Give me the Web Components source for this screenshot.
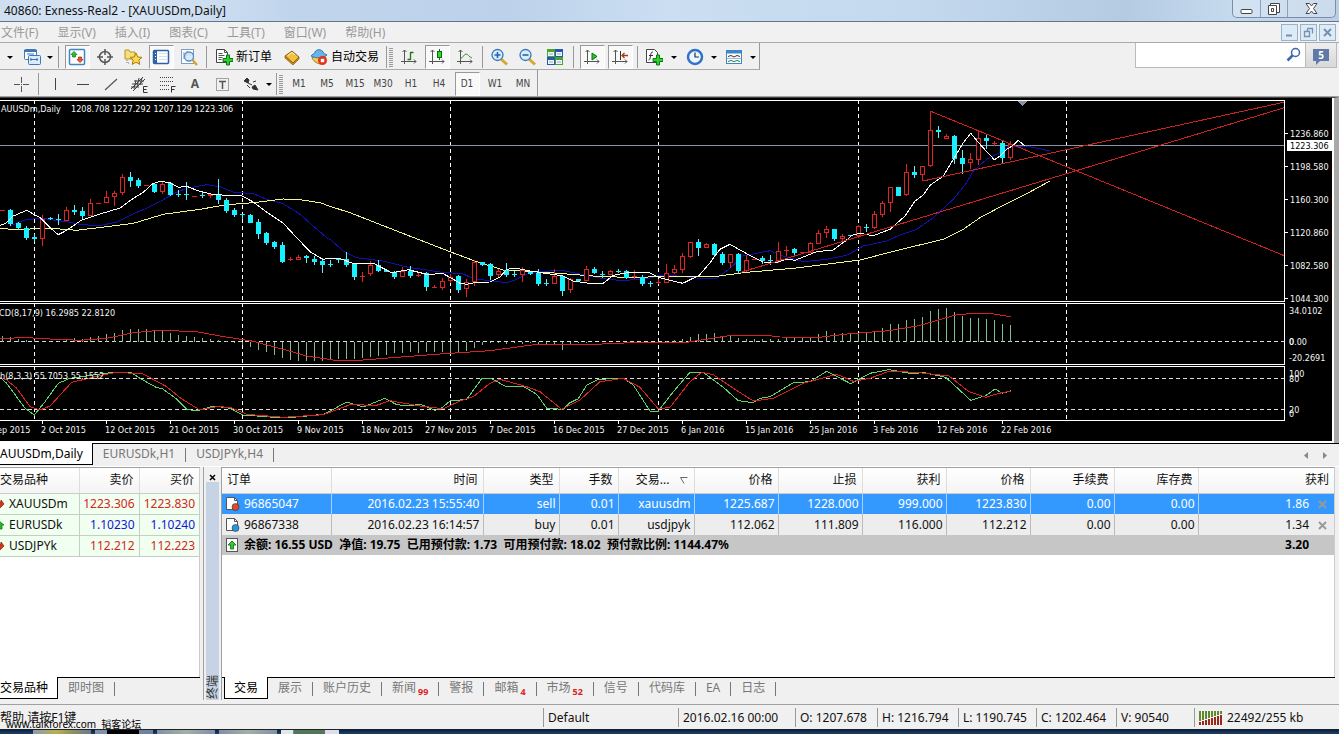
<!DOCTYPE html>
<html lang="zh-CN">
<head>
<meta charset="utf-8">
<title>Exness-Real2 - [XAUUSDm,Daily]</title>
<style>
html,body{margin:0;height:100%}
body{font:12px/16px "Noto Sans","Noto Sans CJK SC",sans-serif;color:#111;background:#f0f0f0;overflow:hidden}
</style>
</head>
<body>
<trade-app></trade-app>
<script>
const BASE = `*{box-sizing:border-box} button,input{font:inherit;color:inherit;margin:0;padding:0;border:0;background:none;border-radius:0}`;
function component(name, css, html, ready) {
  customElements.define(name, class extends HTMLElement {
    constructor() {
      super();
      this.attachShadow({ mode: 'open' });
    }
    connectedCallback() {
      const body = typeof html === 'function' ? html(this) : html;
      this.shadowRoot.innerHTML = `<style>${BASE}${css}</style>${body}`;
      if (ready) ready(this.shadowRoot);
    }
  });
}

/* ---------- icons ---------- */
const axes = '<path d="M4.500 2v14M1 13.500h15M2.500 4l2-2 2 2M14 11.500l2 2-2 2" fill="none" stroke="#555"/>';
const plus = '<path d="M8 10.500h3.500V7h3v3.500H18v3h-3.500V17h-3v-3.500H8z" fill="#2fd02f" stroke="#0a7a12"/>';
const ICONS = {
  windows: '<rect x="1.500" y="1.500" width="12" height="10" rx="1" fill="#fff" stroke="#3f76b5"/><path d="M1 3h13" stroke="#3f76b5" stroke-width="2"/><rect x="5.500" y="7.500" width="12" height="9" rx="1" fill="#dcebfa" stroke="#3f76b5"/><path d="M7 11.500h8M8 10v3M14 10v3M4 6h7" stroke="#3f76b5"/>',
  market: '<rect x="1.500" y="1.500" width="15" height="15" rx="1" fill="#fff" stroke="#3f86c8" stroke-width="1.500"/><path d="M6 3.500l3 3H7.500V9h-3V6.500H3z" fill="#2cc22c" stroke="#087808" stroke-width=".7"/><path d="M12 14.500l-3-3h1.500V9h3v2.500H15z" fill="#f0552c" stroke="#a02008" stroke-width=".7"/>',
  target: '<circle cx="9" cy="9" r="5.500" fill="none" stroke="#555" stroke-width="1.500"/><path d="M9 1v6M9 11v6M1 9h6M11 9h6" stroke="#555" stroke-width="1.500"/>',
  navigator: '<path d="M1 2h4l1 2h5v7H1z" fill="#f6df7a" stroke="#b99425"/><path d="M3 12v3h3" stroke="#777" stroke-dasharray="1 1" fill="none"/><path d="M12 5l1.800 4 4.200.4-3.200 2.700 1 4.300L12 14.200 8.200 16.400l1-4.300L6 9.400l4.200-.4z" fill="#ffd84a" stroke="#a87c12"/>',
  terminal: '<rect x="1.500" y="2.500" width="15" height="13" rx="1" fill="#fff" stroke="#2d62a6" stroke-width="1.500"/><path d="M2 3h3v12H2z" fill="#2d62a6"/><path d="M7 5.500h8M7 8.500h8M7 11.500h8" stroke="#d6e1ee"/><path d="M3.500 5v1M3.500 8v1M3.500 11v1" stroke="#fff"/>',
  tester: '<rect x="1.500" y="1.500" width="12" height="14" fill="#fff" stroke="#7d9cc0"/><path d="M4 4v7M7 3v5M10 5v3" stroke="#6a8cc0"/><circle cx="9" cy="8.500" r="4.500" fill="#cfe5f7cc" stroke="#5a8cc8" stroke-width="1.300"/><path d="M12.500 12l4.500 5" stroke="#d9a42e" stroke-width="2.500"/>',
  order: '<path d="M1.500 1.500h8l3 3v10h-11z" fill="#fff" stroke="#444"/><path d="M9.500 1.500v3h3M3.500 5.500h4M3.500 7.500h6M3.500 9.500h4M3.500 11.500h3" fill="none" stroke="#555"/>' + plus,
  editor: '<path d="M2 8l7-5 7 6-6 6z" fill="#f0c040" stroke="#8a5f10"/><path d="M2 8v2l8 7 6-6V9l-6 6z" fill="#c98a1c" stroke="#8a5f10" stroke-width=".7"/><path d="M5 7.500l4-3 3 2.500" stroke="#fff3b8" fill="none"/>',
  auto: '<path d="M2 10c2 4 6 6 9 6l5-5-2-4H4z" fill="#f3cf4c" stroke="#a07a18"/><path d="M1 8c1-2 4-2 4-4 1-3 7-3 8 0 0 2 3 2 4 3-3 3-11 4-16 1z" fill="#69b4e6" stroke="#2b79b5"/><circle cx="12.500" cy="12.500" r="4.500" fill="#e0341c"/><rect x="10.800" y="10.800" width="3.400" height="3.400" fill="#fff"/>',
  bars: axes + '<path d="M10.500 4v8M10.500 4.500h3M10.500 11.500h-3" stroke="#187818" stroke-width="1.300"/>',
  candles: axes + '<path d="M11.500 1v11" stroke="#087008"/><rect x="9.500" y="3.500" width="4" height="6" fill="#35d435" stroke="#087008"/>',
  line: axes + '<path d="M4 11c3-1 4-5 6-5s3 3 6 4" fill="none" stroke="#3c8c3c"/>',
  zoomin: '<path d="M11 11l6 5.500" stroke="#d5a92e" stroke-width="3"/><circle cx="7.500" cy="7" r="5.500" fill="#d8edfb" stroke="#3a78b8" stroke-width="1.300"/><path d="M4.500 7h6M7.500 4v6" stroke="#2a63ad" stroke-width="1.600"/>',
  zoomout: '<path d="M11 11l6 5.500" stroke="#d5a92e" stroke-width="3"/><circle cx="7.500" cy="7" r="5.500" fill="#d8edfb" stroke="#3a78b8" stroke-width="1.300"/><path d="M4.500 7h6" stroke="#2a63ad" stroke-width="1.600"/>',
  tile: '<path d="M1 1h8v8H1zM9 9h8v8H9z" fill="#4ca32c"/><path d="M9 1h8v8H9zM1 9h8v8H1z" fill="#2a58b0"/><path d="M2 4h6v4H2zM10 4h6v4h-6zM2 12h6v4H2zM10 12h6v4h-6z" fill="#eef6ff"/><path d="M3 6h4M11 6h4M3 14h4M11 14h4" stroke="#9ab"/>',
  shift: axes + '<path d="M9 5l5 3.500L9 12z" fill="#35c035" stroke="#087008"/>',
  autoscroll: axes + '<path d="M9.500 3v9" stroke="#333"/><path d="M17 7.500h-6M13.500 5l-2.500 2.500 2.500 2.500" stroke="#b03a10" fill="none" stroke-width="1.300"/>',
  indicator: '<path d="M1.500 1.500h8l3 3v10h-11z" fill="#fff" stroke="#444"/><path d="M8 4c-2 0-2 1-2.500 4S5 12 3.500 12M4 7.500h4" fill="none" stroke="#333"/>' + plus,
  clock: '<circle cx="9" cy="9" r="7" fill="#eef7ff" stroke="#2f72c8" stroke-width="2.500"/><path d="M9 4.500V9h4" fill="none" stroke="#234" stroke-width="1.200"/>',
  template: '<rect x="1.500" y="2.500" width="15" height="13" fill="#fff" stroke="#3f86c8"/><path d="M2 4h14" stroke="#3f86c8" stroke-width="3"/><path d="M3 8.500l3-1 3 1.500 3-1.500 3 1" fill="none" stroke="#333"/><path d="M2 10.500h14" stroke="#9bc"/><path d="M3 13.500l3-1 3 1 3-1 3 1" fill="none" stroke="#2b7a4b"/>',
  cross: '<path d="M9.500 2v6M9.500 11v6M2 9.500h6M11 9.500h6M9 9.500h1" stroke="#555"/>',
  vline: '<path d="M9.500 3v12" stroke="#444"/>',
  hline: '<path d="M3 9.500h12" stroke="#444"/>',
  tline: '<path d="M3 15L15 4" stroke="#555" stroke-width="1.200"/>',
  equi: '<path d="M1 14L13 2M3 16L15 4M2 9h11M4 6h10M1 12h8M6 5l-2 9M9 3l-2 9M12 3l-2 7" stroke="#444"/><path d="M17.500 11.500h-4v6h4M13.500 14.500h3" fill="none" stroke="#333"/>',
  fibo: '<path d="M2 2.500h14M2 6.500h14M2 10.500h10M2 14.500h10" stroke="#444" stroke-dasharray="1 1"/><path d="M17.500 11.500h-4v6M13.500 14.500h3" fill="none" stroke="#333"/>',
  label: '<rect x="2.500" y="3.500" width="12" height="12" fill="none" stroke="#555" stroke-dasharray="1 1"/><path d="M5 6.500h7M8.500 6v8" stroke="#555" stroke-width="1.500"/>',
  arrows: '<path d="M2 6l3-3 2 2-1 3zM6 8l4 2M10 12l3-2 3 5-5-1zM11 7l3-1M5 10l3 3" fill="#333" stroke="#333"/>',
  find: '<circle cx="10.500" cy="6.500" r="4" fill="#fff" stroke="#3a66b0" stroke-width="1.500"/><path d="M7.500 9.500l-5 5" stroke="#3a66b0" stroke-width="2.500"/>'
};
const svg = (body, w = 18, h = 18) => `<svg width="${w}" height="${h}" viewBox="0 0 ${w} ${h}" aria-hidden="true">${body}</svg>`;

component('tool-button', `
 :host{display:flex;flex:none;width:28px;justify-content:center;align-items:center}
 :host([wide]){width:auto}
 button{display:flex;align-items:center;justify-content:center;width:25px;height:24px;white-space:nowrap}
 :host([wide]) button{width:auto;gap:3px;color:#000}
 :host([on]) button{background:#f9f9f9;border:1px solid #fff;border-top-color:#999;border-left-color:#999}
 svg{display:block;flex:none}
 ::slotted(b){font-size:12px;color:#555}
`, el => `<button aria-label="${el.getAttribute('icon') || 'period'}">${ICONS[el.getAttribute('icon')] ? svg(ICONS[el.getAttribute('icon')]) : ''}<slot></slot></button>`);
component('tool-caret', `
 :host{display:flex;flex:none;width:11px;justify-content:center;align-items:center}
 button{width:7px;height:20px;display:flex;align-items:center}
`, `<button aria-label="more">${svg('<path d="M0 0h6L3 3z" fill="#000"/>', 6, 3)}</button>`);
component('tool-sep', `
 :host{display:flex;flex:none;width:6px;justify-content:center;align-items:center}
 i{width:1px;height:22px;background:#999}
`, `<i></i>`);
component('tool-grip', `
 :host{display:block;flex:none;width:4px;height:19px;margin:auto 0;background:repeating-linear-gradient(#999 0 1px,transparent 1px 2px)}
`, ``);

/* ---------- title and menu ---------- */
component('title-bar', `
 :host{display:flex;justify-content:space-between;height:22px;border-bottom:1px solid #66748a;background:linear-gradient(90deg,#cfdff0,#d6e4f3 10%,#c0d5ec 22%,#bdd2ea 38%,#cbdef2 50%,#c4d9ee 68%,#b4cbe2 84%,#c6daee 92%,#b9cee6);color:#111}
 h1{margin:0;padding:3px 4px;font:inherit;line-height:16px;white-space:pre}
 div{display:flex;width:104px;height:18px;margin-right:3px;border:1px solid #7c8ea6;border-top:0;border-radius:0 0 5px 5px;background:#ffffff40}
 button{flex:1;display:flex;justify-content:center;align-items:center}
 button+button{border-left:1px solid #8fa1b8}
 button:last-child{flex:none;width:48px}
`, `<h1>40860: Exness-Real2 - [XAUUSDm,Daily]</h1><div>
 <button aria-label="minimize">${svg('<rect x="1" y="7.500" width="11" height="4" rx="1" fill="#fff" stroke="#444"/>', 13, 14)}</button>
 <button aria-label="restore">${svg('<path d="M3.500 1.500h9v9h-9z" fill="#fff" stroke="#444"/><path d="M1.500 3.500h8v9h-8z" fill="#fff" stroke="#444"/><path d="M4.500 6.500h2v3h-2z" fill="none" stroke="#444"/>', 14, 14)}</button>
 <button aria-label="close">${svg('<path d="M1 1.500h3.500L6.500 4l2-2.500H12L8.500 6.500 12 11.500H8.500L6.500 9l-2 2.500H1l3.500-5z" fill="#fff" stroke="#444"/>', 13, 13)}</button></div>`);

component('menu-bar', `
 :host{display:flex;justify-content:space-between;height:21px;border-bottom:1px solid #a9abb0;background:#f1f1f1;color:#999}
 nav{display:flex;gap:19px;padding:1px 1px 0}
 button{white-space:nowrap}
 div{display:flex;gap:2px;padding:2px 3px 1px 0}
 div button{width:17px;display:flex;justify-content:center;align-items:center;border:1px solid #9ab1cb;background:#dcebf8}
`, `<nav>${['文件(F)', '显示(V)', '插入(I)', '图表(C)', '工具(T)', '窗口(W)', '帮助(H)'].map(t => `<button>${t}</button>`).join('')}</nav><div>
 <button aria-label="minimize chart">${svg('<path d="M2 8.500h6" stroke="#7790ae" stroke-width="2"/>', 11, 11)}</button>
 <button aria-label="restore chart">${svg('<path d="M4.500 1.500h5v5M4.500 4V1.500M1.500 4.500h5v5h-5z" fill="none" stroke="#7790ae" stroke-width="1.300"/>', 11, 11)}</button>
 <button aria-label="close chart">${svg('<path d="M2 2l7 7M9 2l-7 7" stroke="#7790ae" stroke-width="2"/>', 11, 11)}</button></div>`);

/* ---------- toolbars ---------- */
const tb = (n, a = '') => `<tool-button icon="${n}" ${a}></tool-button>`;
component('tool-rows', `
 :host{display:flex;justify-content:space-between;height:54px;background:#f0f0f0;border-bottom:1px solid #a0a0a0}
 .rows{flex:none}
 .r{display:flex;height:27px;width:max-content;border-right:1px solid #999;border-bottom:1px solid #aaa;padding:2px 0 0 2px}
 .r+.r{border-bottom:0;height:26px;padding-left:7px}
 .r+.r tool-button{color:#444}
 .t{font:10px/14px "DejaVu Sans Condensed","Open Sans",sans-serif}
 .find{display:flex;height:25px;margin-right:2px}
 label{display:flex;align-items:center;width:171px;background:#fff;border:1px solid #bbb;border-top:0;padding-right:2px}
 input{flex:1;min-width:0;outline:0}
 .chat{width:31px;background:linear-gradient(#eee,#d8d8d8);border:1px solid #bbb;border-top:0;border-left:0;display:flex;align-items:center;justify-content:center}
 .chat span{position:relative;width:16px;height:12px;background:#6079a8;color:#fff;font:bold 10px/12px "Noto Sans",sans-serif}
 .chat span::after{content:"";position:absolute;left:3px;top:12px;border:4px solid transparent;border-top-color:#6079a8;border-left:0;border-bottom:0}
 .g4{margin-left:4px}.g6{margin-left:6px}.gr{margin-right:2px}
 .c8{width:8px}.c9{width:9px}.c13{width:13px}.c16{width:16px}
`, `<div class="rows"><div class="r">
 <tool-caret class="c16"></tool-caret>${tb('windows')}<tool-caret class="c8"></tool-caret><tool-sep class="c9"></tool-sep>
 ${tb('market', 'on')}${tb('target')}${tb('navigator')}${tb('terminal', 'on')}${tb('tester')}<tool-sep></tool-sep>
 <tool-button icon="order" wide class="g6">新订单</tool-button><tool-button icon="editor" class="g6"></tool-button>
 <tool-button icon="auto" wide class="g4">自动交易</tool-button><tool-sep class="g4"></tool-sep><tool-grip class="gr"></tool-grip>
 ${tb('bars')}${tb('candles', 'on')}${tb('line')}<tool-sep></tool-sep>
 ${tb('zoomin')}${tb('zoomout')}${tb('tile')}<tool-sep class="c9"></tool-sep>
 ${tb('shift', 'on')}${tb('autoscroll', 'on')}<tool-sep></tool-sep>
 ${tb('indicator')}<tool-caret class="c13"></tool-caret>${tb('clock')}<tool-caret></tool-caret>${tb('template')}<tool-caret></tool-caret></div>
 <div class="r">${tb('cross')}<tool-sep></tool-sep>${['vline', 'hline', 'tline', 'equi', 'fibo'].map(n => tb(n)).join('')}
 <tool-button><b>A</b></tool-button>${tb('label')}${tb('arrows')}<tool-caret class="c8"></tool-caret><tool-sep></tool-sep><tool-grip class="gr"></tool-grip>
 ${['M1', 'M5', 'M15', 'M30', 'H1', 'H4', 'D1', 'W1', 'MN'].map(t => `<tool-button class="t" ${t === 'D1' ? 'on' : ''}>${t}</tool-button>`).join('')}</div></div>
 <div class="find"><label><input type="search" aria-label="search">${svg(ICONS.find)}</label><button class="chat" aria-label="messages"><span>5</span></button></div>`);

/* ---------- chart ---------- */
/* Each bar: high, body top, body bottom, low, rising. Units are thirds of a pixel below y=-2. */
const BARS = [[343,343,345,345,1],[338,341,384,390,0],[377,381,397,403,0],[390,397,427,433,0],[413,424,429,437,0],[358,368,428,450,1],[363,366,370,372,0],[355,369,373,386,0],[333,343,374,374,1],[326,343,349,357,0],[332,346,359,368,0],[310,322,359,359,1],[321,321,323,323,1],[285,304,322,322,1],[284,290,304,330,1],[235,244,290,296,1],[229,243,254,273,0],[247,252,270,275,0],[266,266,268,268,1],[262,264,287,290,0],[256,265,288,293,1],[258,262,297,301,0],[282,294,297,303,0],[259,295,298,313,0],[299,299,301,301,1],[289,296,300,306,0],[290,295,300,306,1],[250,295,313,325,0],[306,311,344,350,0],[335,342,356,364,0],[354,354,358,368,0],[354,358,380,381,0],[368,378,414,428,0],[407,411,441,447,0],[434,438,453,459,0],[437,448,497,500,0],[483,489,491,495,1],[476,482,491,493,1],[478,481,486,501,0],[480,489,497,507,0],[487,495,507,530,0],[492,503,508,514,0],[487,489,492,500,0],[468,489,506,512,0],[500,503,542,553,0],[528,540,544,557,1],[495,507,535,540,1],[493,507,524,527,0],[521,523,528,529,0],[524,527,543,550,0],[512,524,542,543,1],[510,524,540,545,0],[530,536,539,542,1],[527,532,573,584,0],[566,573,575,576,1],[545,556,575,583,1],[535,543,556,561,1],[538,540,581,590,0],[550,557,579,602,1],[492,497,557,571,1],[497,499,506,510,0],[500,504,539,551,0],[518,526,538,545,1],[502,522,536,543,0],[526,534,537,543,0],[512,522,536,558,1],[525,527,535,538,0],[520,530,563,569,0],[548,560,563,571,0],[520,541,563,563,1],[537,540,584,599,0],[545,550,583,590,1],[548,550,556,558,0],[511,519,554,556,1],[514,518,532,535,0],[525,533,537,545,0],[522,524,537,538,1],[520,525,527,531,0],[523,526,545,550,0],[523,541,543,550,1],[538,543,563,570,0],[554,561,564,573,0],[549,559,562,565,1],[505,531,560,560,1],[507,520,532,533,1],[472,481,521,530,1],[437,439,482,485,1],[430,438,455,481,0],[442,445,455,456,1],[441,445,477,480,0],[468,474,500,507,0],[474,475,500,515,1],[470,474,524,535,0],[476,493,524,527,1],[488,488,490,490,1],[481,487,495,503,0],[477,491,495,508,0],[438,465,494,500,1],[451,461,465,480,1],[455,459,471,480,0],[469,469,471,471,1],[437,442,471,471,1],[403,411,443,445,1],[391,400,411,425,1],[398,399,429,434,0],[415,419,429,442,1],[416,418,421,422,0],[388,391,419,425,1],[384,393,397,407,0],[345,355,396,400,1],[316,322,356,362,1],[273,274,322,347,1],[272,273,299,300,0],[205,229,298,299,1],[211,228,236,245,0],[209,211,237,255,1],[46,103,211,213,1],[90,103,109,125,0],[114,121,128,128,1],[117,120,188,203,0],[162,185,203,233,0],[172,190,202,218,1],[106,127,191,207,1],[114,126,135,158,0],[135,141,144,150,1],[135,141,185,205,0],[135,143,186,192,1]];
/* Histogram bar ends, in thirds of a pixel; 124 is the zero line. */
const HIST = [108,112,117,119,121,122,122,122,120,115,117,112,108,102,99,90,87,88,88,92,93,98,104,108,112,114,118,120,122,130,136,140,150,157,165,175,180,182,184,183,182,178,176,177,177,173,170,168,165,160,158,157,158,156,157,155,158,155,152,143,134,129,130,131,130,131,130,131,133,133,150,132,130,128,127,127,127,126,126,126,126,126,124,122,120,118,110,103,101,100,108,108,113,116,116,116,118,116,113,112,112,112,103,92,98,100,103,100,97,92,85,72,72,60,57,50,33,27,24,37,47,53,53,57,60,72,75];
/* Line segments: x offset of the run in pixels, then x,y pairs in thirds of a pixel. */
const LINES = {
 white: [[0,'0,388 15,383 40,360 80,343 120,365 150,395 175,416 200,403 245,372 290,357 360,336 400,307 430,289 455,265 480,256 510,260 535,274 560,271 590,283 640,296 725,299 760,318 795,345 850,382 890,425 930,467 968,490'],[330,'0,487 30,488 75,504 130,502 185,530 235,521 290,535 340,533 370,550 390,562 410,565 440,559 480,558 510,543 530,520 555,516 600,525 700,540 730,555 770,561 820,562 850,538 900,529 960,531'],[660,'0,545 68,562 118,538 150,500 180,460 210,445 260,473 310,498 350,499 380,490 405,493 470,467 520,462 560,432 575,418 600,412 640,419 690,400 735,360 765,315 790,297 810,268 850,240 880,190 910,140 932,112 960,145 1003,191'],[1000,'0,180 20,160 40,148 55,133 75,150']],
 blue: [[0,'30,390 70,373 120,366 160,372 200,377 240,385 295,390 350,378 400,353 440,337 480,317 520,293 560,277 620,266 660,272 700,288 760,293 800,310 850,323 900,355 940,390 980,425'],[330,'0,430 40,465 80,485 160,495 230,513 330,528 400,534 430,548 530,560 560,550 600,530 690,522 740,532 820,548 880,554 960,546'],[660,'0,538 50,540 120,547 170,547 200,525 250,480 330,464 370,480 430,497 500,490 560,478 610,450 680,435 720,417 770,400 820,365 880,310 920,260 940,225 980,190'],[1000,'0,170 30,150 80,150 150,165']],
 yellow: [[0,'0,397 60,402 120,396 180,399 230,403 320,392 400,382 490,355 600,340 680,326 760,320 850,309 900,311 960,320'],[330,'0,331 60,350 200,405 360,467 440,497 520,522 660,530 800,541 920,545'],[660,'0,541 170,541 260,529 400,517 600,492 720,461 850,430 910,400 960,365'],[1000,'0,333 80,293 150,255']],
 signal: [[0,'0,117 70,112 130,116 240,121 320,115 400,98 480,91 590,95 660,108 760,124 850,148 920,168 1000,180 1090,180 1190,172'],[440,'0,162 150,152 290,133 440,134 600,127 740,127 880,105 970,105 1020,111 1140,112 1220,102'],[889,'0,92 90,77 200,45 260,39 310,41 365,50']],
 stoK: [[0,'0,232 20,250 75,325 103,345 135,305 175,250 210,235 300,222 340,217 395,219 425,238 470,263 485,265 530,297 560,328 590,333 640,318 690,325 730,345 850,354 900,350 970,343 1000,328 1040,306 1090,321 1155,295 1190,314 1230,318 1260,312 1305,331'],[440,'0,328 30,303 80,298 125,236 155,236 200,261 250,259 290,283 320,325 370,328 390,308 415,296 440,255 475,238 550,235 580,255 630,333 655,333 700,275 750,217 790,217 850,262 895,302 940,308 960,295 990,290 1060,248 1110,245 1160,214 1232,251 1290,220'],[889,'0,209 75,222 100,217 170,232 245,301 290,287 318,267 340,280 365,272']],
 stoD: [[0,'0,232 20,240 50,265 90,320 120,330 150,318 215,247 300,227 350,217 430,222 500,260 545,297 600,330 650,320 690,322 740,343 850,352 970,344 1050,314 1130,316 1170,302 1260,318'],[440,'10,326 60,303 100,290 150,250 180,238 260,260 300,275 365,328 420,300 480,245 550,235 600,262 655,327 690,322 750,245 785,217 820,224 880,265 940,303 1000,295 1090,250 1190,223 1240,244 1290,235'],[889,'0,214 80,217 180,228 240,275 290,292 330,280 365,273']]
};
const poly = (segs, y0, color) => '<polyline fill="none" stroke="' + color + '" points="' + segs.map(([x0, s]) => s.split(' ').map(p => { const [x, y] = p.split(','); return (x0 + x / 3).toFixed(1) + ',' + (y0 + y / 3).toFixed(1); }).join(' ')).join(' ') + '"/>';
function plot() {
  let o = '';
  for (const x of [34, 242, 450, 658, 858, 1066]) o += `<path d="M${x + .5} 2V322" stroke="#fff" stroke-dasharray="4 3"/>`;
  o += '<path d="M0 47.500H1285" stroke="#8a92a8"/>';
  o += poly(LINES.blue, -2, '#1010b4') + poly(LINES.yellow, -2, '#f4f48c');
  BARS.forEach(([h, t, b, l, up], k) => {
    const x = 2 + 8 * k, r = v => Math.round(v / 3) - 2;
    const top = r(t), bot = Math.max(r(b), top + 1), c = up ? '#e02424' : '#18f0ff';
    o += `<path d="M${x + .5} ${r(h)}V${top}M${x + .5} ${bot}V${r(l)}" stroke="${up ? c : '#60f4ff'}"/>`;
    if (up && bot - top > 1) o += `<rect x="${x - 1.5}" y="${top + .5}" width="4" height="${bot - top - 1}" fill="#000" stroke="${c}"/>`;
    else o += `<rect x="${x - 2}" y="${top}" width="5" height="${bot - top}" fill="${c}"/>`;
  });
  o += poly(LINES.white, -2, '#fff');
  o += '<path d="M930 13L1285 158M923 83L1285 4M740 174.500L1285 9.500" fill="none" stroke="#d02020"/>';
  o += '<path d="M1018 3h9l-4.500 5z" fill="#8a92a8"/>';
  o += '<path d="M0 243.500H1285M0 280.500H1285M0 311.500H1285" stroke="#ddd" stroke-dasharray="4 3"/>';
  HIST.forEach((v, k) => { const y = 202 + v / 3; if (Math.abs(v - 124) > 1) o += `<path d="M${2.5 + 8 * k} 243.500V${y.toFixed(1)}" stroke="#7cc084"/>`; });
  o += poly(LINES.signal, 202, '#d82020') + poly(LINES.stoK, 202, '#5cd468') + poly(LINES.stoD, 202, '#e02020');
  o += '<path d="M0 2.500H1284.500V203.500H0M0 205.500H1284.500V266.500H0M0 268.500H1284.500V322.500H0" fill="none" stroke="#fff"/>';
  const dates = ['2 Oct 2015', '12 Oct 2015', '21 Oct 2015', '30 Oct 2015', '9 Nov 2015', '18 Nov 2015', '27 Nov 2015', '7 Dec 2015', '16 Dec 2015', '27 Dec 2015', '6 Jan 2016', '15 Jan 2016', '25 Jan 2016', '3 Feb 2016', '12 Feb 2016', '22 Feb 2016'];
  dates.forEach((d, i) => { const x = 42 + 64 * i; o += `<path d="M${x + .5} 322v4" stroke="#fff"/><text x="${x - 1}" y="335">${d}</text>`; });
  o += '<text x="-3" y="335">ep 2015</text><text x="1" y="14">AUUSDm,Daily</text><text x="71" y="14">1208.708 1227.292 1207.129 1223.306</text><text x="-1" y="218">CD(8,17,9) 16.2985 22.8120</text><text x="0" y="281">h(8,3,3) 55.7053 55.1552</text>';
  return o;
}
function scale() {
  let o = '';
  [['1236.860', 35], ['1198.580', 68], ['1160.300', 101], ['1120.860', 134], ['1082.580', 167], ['1044.300', 200]].forEach(([t, y]) => o += `<path d="M0 ${y + .5}h3" stroke="#fff"/><text x="5" y="${y + 4}">${t}</text>`);
  o += '<rect x="2" y="42" width="46" height="11" fill="#fff"/><text x="5" y="51" style="fill:#000">1223.306</text>';
  [['34.0102', 216], ['0.00', 247], ['0', 247], ['-20.2691', 263], ['100', 279], ['80', 284], ['20', 315], ['0', 319]].forEach(([t, y]) => o += `<text x="4" y="${y}">${t}</text>`);
  return o;
}
component('chart-view', `
 :host{display:grid;grid-template-columns:minmax(0,1fr) 49px;height:346px;border-right:5px solid #a9a9a9;background:#000;border-top:1px solid #444;box-shadow:inset 0 -2px #fff,inset -2px 0 #fff}
 svg{display:block;width:100%;height:343px;overflow:hidden;shape-rendering:crispEdges}
 text{font:9px "DejaVu Sans Condensed","Open Sans",sans-serif;fill:#f4f4f4}
`, () => `<svg viewBox="0 0 1285 343" preserveAspectRatio="xMidYMin slice">${plot()}</svg><svg viewBox="0 0 49 343">${scale()}</svg>`);

/* ---------- tabs ---------- */
component('tab-strip', `
 :host{display:flex;flex:none;height:23px;background:#f0f0f0;color:#777;border-top:1px solid #000}
 button{flex:none;height:22px;padding:0 11px 2px 10px;position:relative;white-space:nowrap}
 button+button::after{content:"";position:absolute;right:0;top:4px;height:14px;border-right:1px solid #777}
 button:first-of-type{background:#fff;color:#000;border:1px solid #000;border-top:0;margin:-1px 0 0 2px;padding:0 9px 0 9px}
 :host([flush]) button:first-of-type{border-left:0;padding-left:0;margin-left:0}
 sub{font:bold 9px/1px "Noto Sans",sans-serif;color:#d22;margin-left:2px;vertical-align:sub}
 nav{margin-left:auto;display:flex;gap:12px;align-items:center;padding-right:9px}
`, el => el.getAttribute('items').split('|').map(t => { const [a, n] = t.split('#'); return `<button>${a}${n ? `<sub>${n}</sub>` : ''}</button>`; }).join('') +
 (el.hasAttribute('scroll') ? `<nav>${svg('<path d="M4 0v7L0 3.500z" fill="#888"/>', 7, 7)}${svg('<path d="M0 0v7l4-3.500z" fill="#888"/>', 7, 7)}</nav>` : ''));

/* ---------- market watch ---------- */
component('market-watch', `
 :host{display:flex;flex-direction:column;flex:none;width:204px;padding-right:3px;border-right:1px solid #a0a0a0}
 .list{flex:1;background:#fff;border-top:1px solid #a0a0a0;border-right:1px solid #ccc}
 table{border-collapse:collapse;table-layout:fixed;width:100%}
 th{font-weight:400;height:25px;text-align:right;padding:0 5px 0 0;background:linear-gradient(#fff,#f4f4f4);border-right:1px solid #ddd;border-bottom:1px solid #ccc}
 th:first-child{text-align:left;width:79px;padding:0}
 th:nth-child(2){width:60px}
 td{height:21px;padding:0 4px 0 0;text-align:right;background:#f0fff0;border-bottom:1px solid #c3cfc3;border-right:1px solid #c3cfc3;line-height:16px}
 td:last-child,th:last-child{border-right:0}
 td:first-child{text-align:left;padding:0;white-space:nowrap}
 td svg{vertical-align:middle;margin-right:4px}
 .d{color:#d4261c}.u{color:#1414d8}
`, () => `<div class="list"><table><thead><tr><th>交易品种</th><th>卖价</th><th>买价</th></tr></thead><tbody>${[['XAUUSDm', '1223.306', '1223.830', 'd'], ['EURUSDk', '1.10230', '1.10240', 'u'], ['USDJPYk', '112.212', '112.223', 'd']].map(([s, b, a, c]) => `<tr><td>${svg(c === 'd' ? '<path d="M-2 3h3V1l3 4-4 4-2-3z" fill="#d8341c" stroke="#801808" stroke-width=".7"/>' : '<path d="M-1 1l5 4-2 0v4h-3z" fill="#2cb42c" stroke="#086808" stroke-width=".7"/>', 5, 10)}${s}</td><td class="${c}">${b}</td><td class="${c}">${a}</td></tr>`).join('')}</tbody></table></div>
<tab-strip flush items="交易品种|即时图"></tab-strip>`);

/* ---------- terminal ---------- */
const doc = c => svg(`<path d="M1.500 1.500h8l3 3v9h-11z" fill="#fff" stroke="#555"/><path d="M9.500 1.500v3h3" fill="none" stroke="#555"/><circle cx="10.500" cy="11" r="3.500" fill="${c}" stroke="#333" stroke-width=".6"/>`, 15, 16);
const x = `<button aria-label="close order">${svg('<path d="M1 1l7 7M8 1l-7 7" stroke="#999" stroke-width="2"/>', 9, 9)}</button>`;
component('order-terminal', `
 :host{display:flex;flex:1;min-width:0;padding-right:4px}
 aside{display:flex;flex-direction:column;align-items:center;width:13px;margin:0 2px;flex:none}
 aside button{height:15px;padding:2px 0}
 aside div{flex:1;width:13px;background:#c5d3e4;display:flex;align-items:flex-end;justify-content:center;padding-bottom:1px}
 aside span{writing-mode:vertical-rl;text-orientation:sideways;transform:rotate(180deg);font-size:12px;line-height:13px;color:#333}
 section{flex:1;min-width:0;display:flex;flex-direction:column;border-left:1px solid #a0a0a0}
 .list{flex:1;background:#fff;border-top:1px solid #a0a0a0;border-right:1px solid #ccc}
 table{border-collapse:collapse;table-layout:fixed;width:100%}
 th{font-weight:400;height:25px;text-align:right;padding:0 5px;white-space:nowrap;background:linear-gradient(#fff,#f4f4f4);border-right:1px solid #ddd;border-bottom:1px solid #ccc}
 th:first-child,td:first-child{text-align:left}
 th:last-child,td:last-child{border-right:0}
 td{height:21px;padding:0 3px;text-align:right;white-space:nowrap;border-right:1px solid #bbb}
 td:first-child{padding:0 3px}
 tr.s td{background:#3399ff;color:#fff;border-right-color:#a8d0f8}
 tr.n td{background:#ededed}
 tr.t td{background:#c6c6c6;border:0;font-weight:700;color:#000;height:20px}
 td:last-child{padding-right:6px}
 tr.t td:last-child{padding-right:25px}
 td svg{vertical-align:middle}
 td:first-child svg{margin-right:4px;vertical-align:-4px}
 td button{margin-left:8px;width:11px}
 th svg{margin-left:10px}
 .b{white-space:pre}
`, () => {
  const cols = [109, 152, 76, 59, 76, 84, 84, 84, 84, 84, 84, 0];
  const heads = ['订单', '时间', '类型', '手数', '交易...' + svg('<path d="M7.500.500h-7l3.500 6" fill="none" stroke="#666"/>', 9, 7), '价格', '止损', '获利', '价格', '手续费', '库存费', '获利'];
  const rows = [['s', '#e04a28', '96865047', '2016.02.23 15:55:40', 'sell', '0.01', 'xauusdm', '1225.687', '1228.000', '999.000', '1223.830', '0.00', '0.00', '1.86'], ['n', '#2a94e0', '96867338', '2016.02.23 16:14:57', 'buy', '0.01', 'usdjpyk', '112.062', '111.809', '116.000', '112.212', '0.00', '0.00', '1.34']];
  return `<aside><button aria-label="close terminal">${svg('<path d="M1 1l5 5M6 1l-5 5" stroke="#000" stroke-width="1.500"/>', 7, 7)}</button><div><span>终端</span></div></aside>
 <section><div class="list"><table><colgroup>${cols.map(c => `<col${c ? ` style="width:${c}px"` : ''}>`).join('')}</colgroup><thead><tr>${heads.map(h => `<th>${h}</th>`).join('')}</tr></thead><tbody>
 ${rows.map(([k, c, id, ...v]) => `<tr class="${k}"><td>${doc(c)}${id}</td>${v.map((t, i) => `<td>${t}${i === v.length - 1 ? x : ''}</td>`).join('')}</tr>`).join('')}
 <tr class="t"><td class="b" colspan="11">${svg('<rect x="1.500" y="1.500" width="11" height="13" fill="#fff" stroke="#555"/><path d="M7 4l4 4H8.500v4h-3V8H3z" fill="#35c435" stroke="#087008" stroke-width=".8"/>', 15, 16)}余额: 16.55 USD  净值: 19.75  已用预付款: 1.73  可用预付款: 18.02  预付款比例: 1144.47%</td><td>3.20</td></tr></tbody></table></div>
 <tab-strip items="交易|展示|账户历史|新闻#99|警报|邮箱#4|市场#52|信号|代码库|EA|日志"></tab-strip></section>`;
});

/* ---------- status bar and task bar ---------- */
component('status-bar', `
 :host{display:flex;flex:none;height:25px;align-items:center;border-top:1px solid #a0a0a0;background:#f0f0f0;position:relative}
 span{flex:none;height:19px;line-height:20px;padding-left:4px;border-left:1px solid #999;white-space:nowrap}
 .help{flex:1;border:0;padding:0}
 em{position:absolute;left:6px;top:12px;font:10px/14px "Noto Sans","Noto Sans CJK SC",sans-serif;color:#000;white-space:pre}
 svg{vertical-align:middle;margin-right:4px}
 .w1{width:135px}.w2{width:117px}.w3{width:82px}.w4{width:81px}.w5{width:78px}.w6{width:80px}.w7{width:78px}.w8{width:145px}
`, () => {
  let bars = '';
  for (let i = 0; i < 8; i++) bars += `<path d="M${i * 3 + 1} 0v${10 - i}" stroke="#5c8a2c" stroke-width="2"/><path d="M${i * 3 + 1} ${11 - i}V14" stroke="#982818" stroke-width="2"/>`;
  return `<span class="help">帮助,请按F1键</span><span class="w1">Default</span><span class="w2">2016.02.16 00:00</span><span class="w3">O: 1207.678</span><span class="w4">H: 1216.794</span><span class="w5">L: 1190.745</span><span class="w6">C: 1202.464</span><span class="w7">V: 90540</span><span class="w8">${svg(bars, 24, 14)}22492/255 kb</span><em>www.talkforex.com  韬客论坛</em>`;
});
component('task-bar', `
 :host{display:flex;flex:none;height:5px;gap:4px;padding-left:33px;background:linear-gradient(#0c1c30,#1c4068)}
 i{width:58px;background:linear-gradient(90deg,#8a9aae,#b8b050 40%,#8a9060 70%,#6a7a98);border-top:1px solid #222}
 i:nth-of-type(2){background:linear-gradient(90deg,#8090a8 20%,#000 21% 75%,#7080a0 76%)}
 i:nth-of-type(3),i:nth-of-type(4){background:linear-gradient(90deg,#8090a8,#a0b0a8,#8090a8)}
 i:nth-of-type(5){background:linear-gradient(90deg,#e0e8ee 20%,#507858 22% 75%,#dde 76%)}
`, `<i></i><i></i><i></i><i></i><i></i>`);

component('trade-app', `
 :host{display:flex;flex-direction:column;height:100vh;min-width:0}
 main{flex:1;display:flex;min-height:0;padding-bottom:4px;border-top:1px solid #fff}
 title-bar,menu-bar,tool-rows,chart-view{flex:none}
`, `<title-bar></title-bar><menu-bar></menu-bar><tool-rows></tool-rows><chart-view></chart-view>
<tab-strip flush scroll items="AUUSDm,Daily|EURUSDk,H1|USDJPYk,H4"></tab-strip>
<main><market-watch></market-watch><order-terminal></order-terminal></main>
<status-bar></status-bar><task-bar></task-bar>`);
</script>
</body>
</html>
